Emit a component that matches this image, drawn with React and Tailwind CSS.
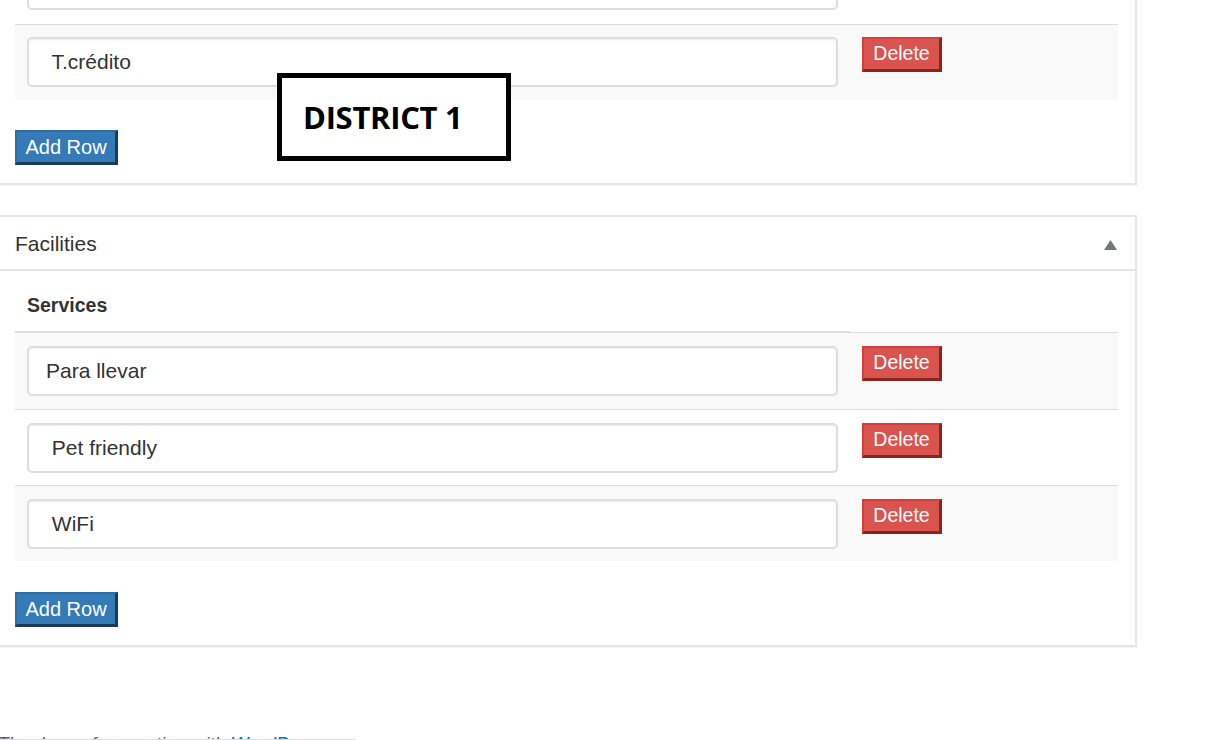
import { useState } from 'react';

const topRows = [' Efectivo', ' T.crédito'];
const services = ['Para llevar', ' Pet friendly', ' WiFi'];

function DeleteButton() {
  return (
    <button className="w-[80px] h-[35px] bg-[#d9534f] text-white text-[19.5px] leading-none border-t-2 border-l-2 border-t-[#d43f3a] border-l-[#d43f3a] border-b-[3px] border-r-[3px] border-b-[#88251f] border-r-[#88251f] flex items-center justify-center">
      Delete
    </button>
  );
}

function AddRow() {
  return (
    <button className="w-[103px] h-[35px] bg-[#337ab7] text-white text-[20px] leading-none border-t-2 border-l-2 border-t-[#2e6da4] border-l-[#2e6da4] border-b-[3px] border-r-[3px] border-b-[#1b3b58] border-r-[#1b3b58] flex items-center justify-center">
      Add Row
    </button>
  );
}

function Row({ value, striped, first, pad }) {
  return (
    <div className={`flex h-[76px] ${first ? '' : 'border-t border-[#ddd]'} ${striped ? 'bg-[#f9f9f9]' : 'bg-white'}`}>
      <div className="w-[835px] px-[12px]" style={{ paddingTop: pad }}>
        <input
          defaultValue={value}
          className="w-full h-[50px] rounded-[5px] border-2 border-[#ddd] bg-white pl-[17px] text-[21px] text-[#333] shadow-[inset_0_1px_2px_rgba(0,0,0,0.07)] outline-none"
        />
      </div>
      <div className="flex-1 pl-[12px]" style={{ paddingTop: pad }}>
        <DeleteButton />
      </div>
    </div>
  );
}

export default function App() {
  const [open] = useState(true);

  return (
    <div className="relative h-[740px] overflow-hidden bg-white text-[#333] font-['Liberation_Sans',Arial,sans-serif]">
      <div className="w-[1139px] ml-[-2px]">
        {/* payment methods box, scrolled past its header */}
        <div className="mt-[-54px] border-2 border-[#e5e5e5] bg-white shadow-[0_1px_1px_rgba(0,0,0,0.04)] pl-[15px] pr-[17px] pb-[18px]">
          <div className="w-[1103px]">
            <Row value={topRows[0]} first pad={12} />
            <Row value={topRows[1]} striped pad={12} />
          </div>
          <div className="mt-[30px]">
            <AddRow />
          </div>
        </div>

        {/* facilities */}
        <div className="mt-[30px] border-2 border-[#e5e5e5] bg-white shadow-[0_1px_1px_rgba(0,0,0,0.04)]">
          <div className="h-[54px] flex items-center justify-between pl-[15px] pr-[18px] pt-[2px] border-b-2 border-[#e5e5e5]">
            <span className="text-[21px]">Facilities</span>
            <svg width="13" height="10" viewBox="0 0 13 10" className={`mt-[2px] ${open ? '' : 'rotate-180'}`}>
              <path d="M6.5 0 L13 10 L0 10 Z" fill="#72777c" />
            </svg>
          </div>
          <div className="pl-[15px] pr-[17px] pb-[18px]">
            <div className="w-[1103px]">
              <div className="flex h-[62px]">
                <div className="w-[835px] border-b-2 border-[#ddd] pl-[12px] flex items-center pt-[9px]">
                  <span className="text-[19.5px] font-bold">Services</span>
                </div>
                <div className="flex-1 border-b border-[#ddd]" />
              </div>
              {services.map((s, i) => (
                <Row key={i} value={s} striped={i % 2 === 0} first={i === 0} pad={13} />
              ))}
            </div>
            <div className="mt-[31px]">
              <AddRow />
            </div>
          </div>
        </div>
      </div>

      <p className="mt-[85px] ml-[-3px] italic text-[19px] leading-[23px] text-[#555d66]">
        Thank you for creating with <a className="text-[#0073aa] underline">WordPress</a>.
      </p>
      <div className="absolute left-0 top-[739px] w-[355px] h-[10px] bg-white border-t border-[#ddd]" />

      <div className="absolute left-[277px] top-[73px] w-[234px] h-[88px] border-[5px] border-black bg-white flex items-center pl-[21px]">
        <span className="font-['Open_Sans',sans-serif] font-bold text-[31px] text-black tracking-[-0.3px]">DISTRICT 1</span>
      </div>
    </div>
  );
}
